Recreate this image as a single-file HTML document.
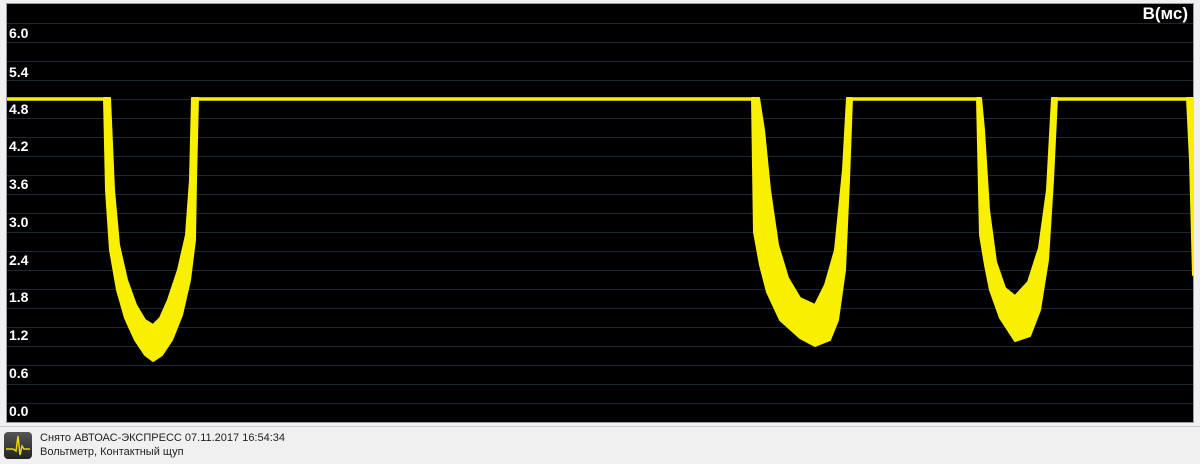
<!DOCTYPE html>
<html><head><meta charset="utf-8"><style>
html,body{margin:0;padding:0;width:1200px;height:463px;overflow:hidden;background:#f0f0f0;font-family:"Liberation Sans",sans-serif}
#plot{position:absolute;left:6px;top:3px;width:1188px;height:420px;background:#000;border:1px solid #9aa0a8;box-sizing:border-box}
.lbl{position:absolute;left:9px;color:#fff;font-weight:bold;font-size:14px}
#unit{position:absolute;right:12px;top:4px;color:#fff;font-weight:bold;font-size:17px}
#status{position:absolute;left:0;top:426px;width:1200px;height:37px;background:#f0f0f0;border-top:1px solid #c8c8c8}
#icon{position:absolute;left:4px;top:5px;width:28px;height:27px;border-radius:4px;background:linear-gradient(#555,#222)}
.st{position:absolute;left:40px;font-size:11px;color:#222}
</style></head><body>
<div id="plot"></div>
<svg width="1200" height="463" style="position:absolute;left:0;top:0">
<g stroke="#1e2835" stroke-width="1">
<line x1="7" x2="1193" y1="23.5" y2="23.5"/><line x1="7" x2="1193" y1="42.5" y2="42.5"/><line x1="7" x2="1193" y1="61.5" y2="61.5"/><line x1="7" x2="1193" y1="80.5" y2="80.5"/><line x1="7" x2="1193" y1="99.5" y2="99.5"/><line x1="7" x2="1193" y1="118.5" y2="118.5"/><line x1="7" x2="1193" y1="137.5" y2="137.5"/><line x1="7" x2="1193" y1="156.5" y2="156.5"/><line x1="7" x2="1193" y1="175.5" y2="175.5"/><line x1="7" x2="1193" y1="194.5" y2="194.5"/><line x1="7" x2="1193" y1="213.5" y2="213.5"/><line x1="7" x2="1193" y1="232.5" y2="232.5"/><line x1="7" x2="1193" y1="251.5" y2="251.5"/><line x1="7" x2="1193" y1="270.5" y2="270.5"/><line x1="7" x2="1193" y1="289.5" y2="289.5"/><line x1="7" x2="1193" y1="308.5" y2="308.5"/><line x1="7" x2="1193" y1="327.5" y2="327.5"/><line x1="7" x2="1193" y1="346.5" y2="346.5"/><line x1="7" x2="1193" y1="365.5" y2="365.5"/><line x1="7" x2="1193" y1="384.5" y2="384.5"/><line x1="7" x2="1193" y1="403.5" y2="403.5"/>
</g>
<g stroke="#f8f000" stroke-width="3.5" fill="none">
<line x1="7" x2="107" y1="99" y2="99"/><line x1="193" x2="755" y1="99" y2="99"/><line x1="848" x2="980" y1="99" y2="99"/><line x1="1054" x2="1190" y1="99" y2="99"/>
</g>
<g fill="#f8f000" stroke="#f8f000" stroke-width="2" stroke-linejoin="round">
<polygon points="104,98 106,190 110,250 117,290 125,318 135,340 145,355 153,361 162,355 172,340 182,315 190,280 195,240 196,180 198,98 192,98 190,180 186,235 178,270 168,300 160,318 153,325 145,320 136,305 127,280 119,245 114,190 110,98"/>
<polygon points="752,98 754,232 760,265 767,292 780,320 800,338 815,346 830,340 838,320 845,270 849,180 852,98 847,98 843,170 835,250 825,285 815,305 800,298 788,278 778,245 770,190 764,130 759,98"/>
<polygon points="977,98 980,235 985,265 990,290 1000,318 1015,341 1030,336 1040,310 1048,260 1053,180 1057,98 1052,98 1047,190 1039,248 1028,282 1015,296 1005,288 996,262 989,210 984,130 981,98"/>
<polygon points="1187,98 1190,160 1193,275 1193,98"/>
</g>
</svg>
<div class="lbl" style="top:25px">6.0</div>
<div class="lbl" style="top:64px">5.4</div>
<div class="lbl" style="top:101px">4.8</div>
<div class="lbl" style="top:138px">4.2</div>
<div class="lbl" style="top:176px">3.6</div>
<div class="lbl" style="top:214px">3.0</div>
<div class="lbl" style="top:252px">2.4</div>
<div class="lbl" style="top:289px">1.8</div>
<div class="lbl" style="top:327px">1.2</div>
<div class="lbl" style="top:365px">0.6</div>
<div class="lbl" style="top:403px">0.0</div>
<div id="unit">В(мс)</div>
<div id="status">
<div id="icon"><svg width="28" height="27"><polyline points="2,17 9,17 12,19 14,4 16,23 18,14 20,17 26,17" fill="none" stroke="#e8d800" stroke-width="1.5"/></svg></div>
<div class="st" style="top:5px">Снято АВТОАС-ЭКСПРЕСС 07.11.2017 16:54:34</div>
<div class="st" style="top:19px">Вольтметр, Контактный щуп</div>
</div>
</body></html>
